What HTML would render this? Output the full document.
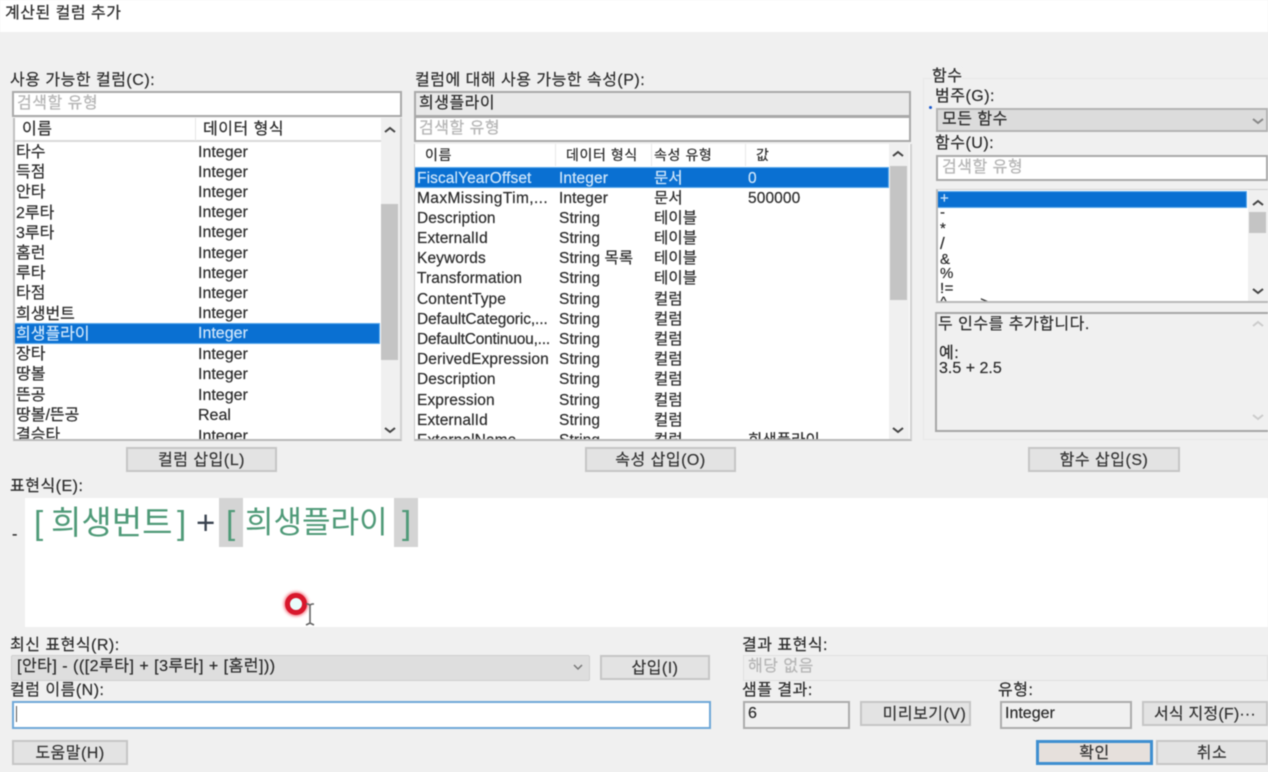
<!DOCTYPE html>
<html lang="ko"><head><meta charset="utf-8"><title>계산된 컬럼 추가</title>
<style>
html,body{margin:0;padding:0}
body{width:1268px;height:772px;overflow:hidden;background:#f0f0f0;position:relative;font:16px/20px "Liberation Sans","Noto Sans CJK KR",sans-serif;letter-spacing:.5px;color:#2b2b2b}
#w{position:absolute;left:0;top:0;width:1268px;height:772px;overflow:hidden;filter:blur(.55px);-webkit-text-stroke:.2px currentColor}
#w div{position:absolute;white-space:nowrap;box-sizing:border-box}
.box{background:#fff;border:2px solid #a9a9a9}
.g{color:#b5b5b5}
.btn{background:#e3e3e3;border:2px solid #c6c6c6;text-align:center;color:#333;height:25px;line-height:23px}
.sel{background:#0a70d2;box-shadow:0 0 0 1px #5aa9ec}
.w{color:#cfe6fb}
.track{background:#f0f0f0}
.thumb{background:#c4c4c4}
.clip{overflow:hidden}
.l{letter-spacing:0}
.c{letter-spacing:.1px;font-size:15.5px}
.h{font-size:14px;letter-spacing:.6px}
.e{font-size:33px;line-height:44px;color:#4f9a78;letter-spacing:0;-webkit-text-stroke:0}
svg{position:absolute}
</style></head><body><div id="w">
<div style="left:0;top:0;width:1268px;height:32px;background:#fff"></div>
<div style="left:5px;top:4px">계산된 컬럼 추가</div>

<!-- left -->
<div style="left:10px;top:71px">사용 가능한 컬럼(C):</div>
<div class="box g" style="left:12px;top:91px;width:390px;height:26px;padding:1px 3px">검색할 유형</div>
<div class="clip l" style="left:13px;top:118px;width:389px;height:323px;background:#fff;border-right:2px solid #d0d0d0;border-bottom:2px solid #b8b8b8;border-left:2px solid #c0c0c0">
 <div style="left:0;top:0;width:366px;height:24px;border-bottom:2px solid #d9d9d9"></div>
 <div style="left:180px;top:0;width:1px;height:23px;background:#e6e6e6"></div>
 <div style="left:7px;top:2px;letter-spacing:.5px">이름</div><div style="left:188px;top:2px;letter-spacing:.5px">데이터 형식</div>
 <div class="sel" style="left:0;top:206px;width:364px;height:19px"></div>
 <div style="left:1px;top:25px">타수</div><div style="left:183px;top:25px">Integer</div>
 <div style="left:1px;top:45px">득점</div><div style="left:183px;top:45px">Integer</div>
 <div style="left:1px;top:65px">안타</div><div style="left:183px;top:65px">Integer</div>
 <div style="left:1px;top:86px">2루타</div><div style="left:183px;top:85px">Integer</div>
 <div style="left:1px;top:106px">3루타</div><div style="left:183px;top:105px">Integer</div>
 <div style="left:1px;top:126px">홈런</div><div style="left:183px;top:126px">Integer</div>
 <div style="left:1px;top:146px">루타</div><div style="left:183px;top:146px">Integer</div>
 <div style="left:1px;top:166px">타점</div><div style="left:183px;top:166px">Integer</div>
 <div style="left:1px;top:187px">희생번트</div><div style="left:183px;top:186px">Integer</div>
 <div class="w" style="left:1px;top:207px">희생플라이</div><div class="w" style="left:183px;top:206px">Integer</div>
 <div style="left:1px;top:227px">장타</div><div style="left:183px;top:227px">Integer</div>
 <div style="left:1px;top:247px">땅볼</div><div style="left:183px;top:247px">Integer</div>
 <div style="left:1px;top:268px">뜬공</div><div style="left:183px;top:268px">Integer</div>
 <div style="left:1px;top:288px">땅볼/뜬공</div><div style="left:183px;top:288px">Real</div>
 <div style="left:1px;top:308px">결승타</div><div style="left:183px;top:309px">Integer</div>
 <div class="track" style="left:366px;top:0;width:19px;height:321px"></div>
 <div class="thumb" style="left:366px;top:86px;width:17px;height:156px"></div>
</div>
<div class="btn" style="left:126px;top:447px;width:151px">컬럼 삽입(L)</div>

<!-- center -->
<div style="left:415px;top:71px">컬럼에 대해 사용 가능한 속성(P):</div>
<div style="left:414px;top:91px;width:497px;height:26px;background:#e9e9e9;border:2px solid #a9a9a9;padding:1px 3px">희생플라이</div>
<div class="box g" style="left:414px;top:116px;width:497px;height:26px;padding:1px 3px">검색할 유형</div>
<div class="clip c" style="left:414px;top:144px;width:498px;height:297px;background:#fff;border-right:2px solid #d0d0d0;border-bottom:2px solid #b8b8b8;border-left:1px solid #c8c8c8">
 <div class="h" style="left:10px;top:1px">이름</div>
 <div class="h" style="left:151px;top:1px">데이터 형식</div>
 <div class="h" style="left:239px;top:1px">속성 유형</div>
 <div class="h" style="left:341px;top:1px">값</div>
 <div style="left:140px;top:0;width:1px;height:22px;background:#e8e8e8"></div>
 <div style="left:236px;top:0;width:1px;height:22px;background:#e8e8e8"></div>
 <div style="left:330px;top:0;width:1px;height:22px;background:#e8e8e8"></div>
 <div class="sel" style="left:0;top:24px;width:473px;height:19px"></div>
 <div class="w" style="left:2px;top:25px">FiscalYearOffset</div><div class="w" style="left:144px;top:25px">Integer</div><div class="w" style="left:239px;top:25px">문서</div><div class="w" style="left:333px;top:25px">0</div>
 <div style="left:2px;top:45px;letter-spacing:.4px">MaxMissingTim,...</div><div style="left:144px;top:45px">Integer</div><div style="left:239px;top:45px">문서</div><div style="left:333px;top:45px">500000</div>
 <div style="left:2px;top:65px">Description</div><div style="left:144px;top:65px">String</div><div style="left:239px;top:65px">테이블</div>
 <div style="left:2px;top:85px">ExternalId</div><div style="left:144px;top:85px">String</div><div style="left:239px;top:85px">테이블</div>
 <div style="left:2px;top:105px">Keywords</div><div style="left:144px;top:105px">String 목록</div><div style="left:239px;top:105px">테이블</div>
 <div style="left:2px;top:125px">Transformation</div><div style="left:144px;top:125px">String</div><div style="left:239px;top:125px">테이블</div>
 <div style="left:2px;top:146px">ContentType</div><div style="left:144px;top:146px">String</div><div style="left:239px;top:146px">컬럼</div>
 <div style="left:2px;top:166px;letter-spacing:-.1px">DefaultCategoric,...</div><div style="left:144px;top:166px">String</div><div style="left:239px;top:166px">컬럼</div>
 <div style="left:2px;top:186px;letter-spacing:-.2px">DefaultContinuou,...</div><div style="left:144px;top:186px">String</div><div style="left:239px;top:186px">컬럼</div>
 <div style="left:2px;top:206px">DerivedExpression</div><div style="left:144px;top:206px">String</div><div style="left:239px;top:206px">컬럼</div>
 <div style="left:2px;top:226px">Description</div><div style="left:144px;top:226px">String</div><div style="left:239px;top:226px">컬럼</div>
 <div style="left:2px;top:247px">Expression</div><div style="left:144px;top:247px">String</div><div style="left:239px;top:247px">컬럼</div>
 <div style="left:2px;top:267px">ExternalId</div><div style="left:144px;top:267px">String</div><div style="left:239px;top:267px">컬럼</div>
 <div style="left:2px;top:287px">ExternalName</div><div style="left:144px;top:287px">String</div><div style="left:239px;top:287px">컬럼</div><div style="left:333px;top:287px">희생플라이</div>
 <div class="track" style="left:474px;top:0;width:20px;height:295px"></div>
 <div class="thumb" style="left:475px;top:22px;width:17px;height:134px"></div>
</div>
<div class="btn" style="left:585px;top:447px;width:151px">속성 삽입(O)</div>

<!-- right -->
<div style="left:923px;top:78px;width:345px;height:362px;border:1px solid #e8e8e8;border-right:0"></div>
<div style="left:932px;top:67px;background:#f0f0f0">함수</div>
<div style="left:935px;top:87px">범주(G):</div>
<div style="left:929px;top:106px;width:3px;height:3px;border-radius:50%;background:#1a5ad0"></div>
<div style="left:936px;top:108px;width:332px;height:24px;background:#dcdcdc;border:2px solid #b4b4b4;padding:0 4px">모든 함수</div>
<div style="left:935px;top:134px">함수(U):</div>
<div class="box g" style="left:936px;top:155px;width:332px;height:26px;padding:1px 4px">검색할 유형</div>
<div class="clip" style="left:936px;top:189px;width:332px;height:114px;background:#fff;border:2px solid #b8b8b8;border-right:0;border-top:1px solid #d0d0d0;font-size:15px;line-height:18px">
 <div class="sel" style="left:0;top:2px;width:308px;height:15px"></div>
 <div class="w" style="left:2px;top:0">+</div>
 <div style="left:2px;top:14px">-</div>
 <div style="left:2px;top:30px">*</div>
 <div style="left:2px;top:45px;font-size:17px">/</div>
 <div style="left:2px;top:61px">&amp;</div>
 <div style="left:2px;top:75px">%</div>
 <div style="left:2px;top:90px">!=</div>
 <div style="left:2px;top:104px">^.......&gt;</div>
 <div class="track" style="left:310px;top:0;width:20px;height:112px"></div>
 <div class="thumb" style="left:311px;top:22px;width:17px;height:21px"></div>
</div>
<div style="left:935px;top:312px;width:333px;height:120px;background:#f0f0f0;border:2px solid #a6a6a6;border-right:0"></div>
<div style="left:938px;top:315px">두 인수를 추가합니다.</div>
<div style="left:939px;top:344px">예:</div>
<div style="left:939px;top:359px;letter-spacing:0">3.5 + 2.5</div>
<div class="btn" style="left:1028px;top:447px;width:152px">함수 삽입(S)</div>

<!-- expression -->
<div style="left:10px;top:477px">표현식(E):</div>
<div style="left:25px;top:498px;width:1243px;height:129px;background:#fff"></div>
<div style="left:12px;top:525px">-</div>
<div style="left:219px;top:498px;width:24px;height:49px;background:#d4d4d4"></div>
<div style="left:394px;top:498px;width:24px;height:49px;background:#d4d4d4"></div>
<div class="e" style="left:34px;top:501px">[</div>
<div class="e" style="left:51px;top:501px">희생번트</div>
<div class="e" style="left:177px;top:501px">]</div>
<div class="e" style="left:196px;top:501px;color:#3a4350">+</div>
<div class="e" style="left:226px;top:501px">[</div>
<div class="e" style="left:245px;top:501px;font-size:31px;letter-spacing:0">희생플라이</div>
<div class="e" style="left:402px;top:501px">]</div>
<div style="left:285px;top:593px;width:22px;height:22px;border-radius:50%;background:#e9fbfb;border:5px solid #d8172c;box-shadow:0 0 3px 1px #f0616f"></div>
<svg style="left:300px;top:602px" width="20" height="26" fill="none" stroke="#666" stroke-width="1.6"><path d="M6 2h2l2 1 2-1h2M10 3v19M6 23l4-2 4 2"/></svg>

<!-- bottom left -->
<div style="left:10px;top:636px">최신 표현식(R):</div>
<div style="left:11px;top:655px;width:579px;height:26px;background:#dedede;border-radius:2px;border:1px solid #cfcfcf;padding:1px 5px">[안타] - (([2루타] + [3루타] + [홈런]))</div>
<div class="btn" style="left:600px;top:655px;width:110px">삽입(I)</div>
<div style="left:10px;top:681px">컬럼 이름(N):</div>
<div style="left:12px;top:701px;width:699px;height:28px;background:#fff;border:2px solid #6fa8d8"></div>
<div style="left:16px;top:706px;width:1px;height:16px;background:#555"></div>
<div class="btn" style="left:12px;top:740px;width:116px">도움말(H)</div>

<!-- bottom right -->
<div style="left:742px;top:636px">결과 표현식:</div>
<div class="g" style="left:743px;top:655px;width:525px;height:26px;background:#eeeeee;border:1px solid #e0e0e0;padding:1px 4px">해당 없음</div>
<div style="left:742px;top:681px">샘플 결과:</div>
<div style="left:743px;top:701px;width:107px;height:28px;background:#f0f0f0;border:2px solid #acacac;padding:1px 3px">6</div>
<div class="btn" style="left:860px;top:701px;width:111px;padding-left:18px">미리보기(V)</div>
<div style="left:998px;top:681px">유형:</div>
<div style="left:1000px;top:701px;width:132px;height:28px;background:#f0f0f0;border:2px solid #acacac;padding:1px 3px;letter-spacing:0">Integer</div>
<div class="btn" style="left:1142px;top:701px;width:126px;letter-spacing:.2px">서식 지정(F)···</div>
<div class="btn" style="left:1036px;top:740px;width:117px;border:3px solid #3f8fd0;background:#e6e0dc;line-height:21px">확인</div>
<div class="btn" style="left:1156px;top:740px;width:112px">취소</div>

<svg style="left:0;top:0" width="1268" height="772" fill="none" stroke="#444" stroke-width="2">
<path d="M385 132l5-4 5 4M385 428l5 4 5-4"/>
<path d="M893 156l5-4 5 4M893 428l5 4 5-4"/>
<path d="M1253 205l5-4 5 4M1253 289l5 4 5-4"/>
<path d="M1253 119l5 4 5-4" stroke="#888"/>
<path d="M1253 326l5-4 5 4M1253 415l5 4 5-4" stroke="#ccc"/>
<path d="M574 665l4 4 4-4" stroke="#777" stroke-width="1.5"/>
</svg>
</div></body></html>
